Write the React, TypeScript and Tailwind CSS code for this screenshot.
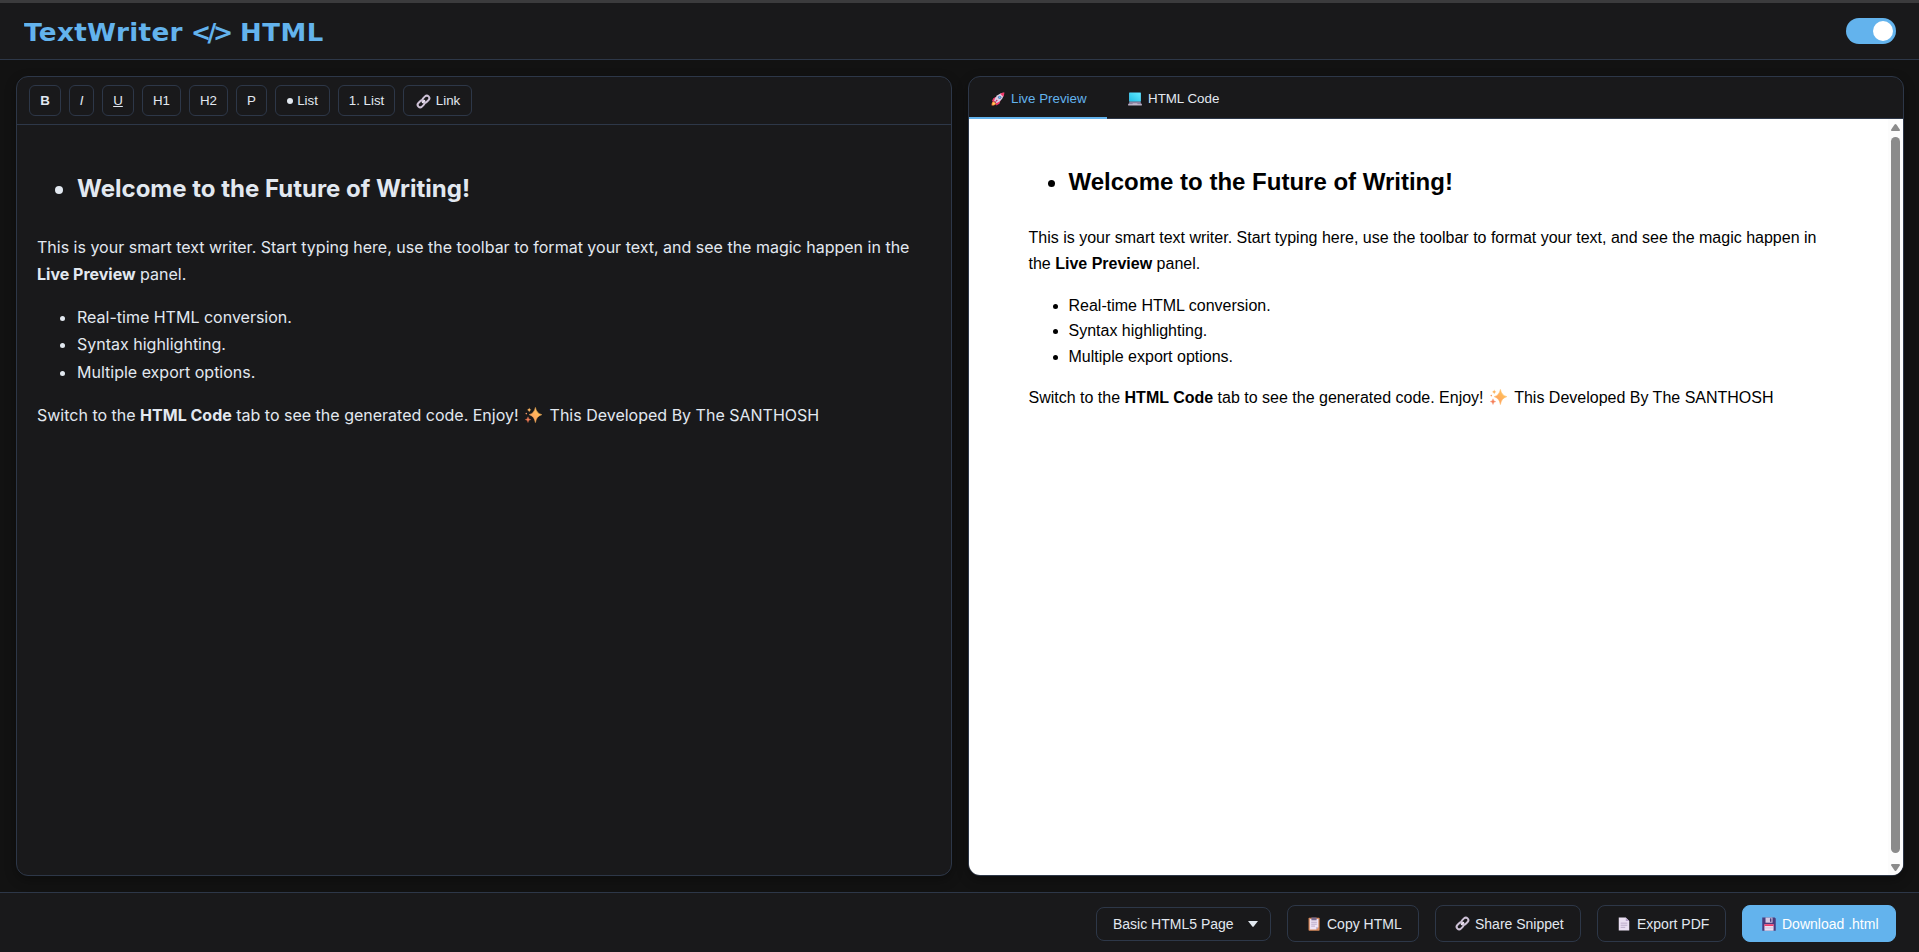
import React, { useState } from "react";

type IconProps = { className?: string };

function LinkIcon({ className }: IconProps) {
  return (
    <svg viewBox="0 0 16 16" className={className} fill="none" stroke="#cdc1d6" strokeWidth="2.1" strokeLinecap="round">
      <rect x="-4" y="-2.7" width="8" height="5.4" rx="2.7" transform="translate(10.6 5.4) rotate(-45)" />
      <rect x="-4" y="-2.7" width="8" height="5.4" rx="2.7" transform="translate(5.4 10.6) rotate(-45)" />
      <path d="M6.8 9.200l2.400-2.400" stroke="#efe8f4" strokeWidth="1.4" />
    </svg>
  );
}

function RocketIcon({ className }: IconProps) {
  return (
    <svg viewBox="0 0 16 16" className={className}>
      <path d="M.8 15.400c-.4-2 .4-4.200 2.200-5l3 3C5 15 2.800 15.700.8 15.400z" fill="#ff8a3c" />
      <path d="M1.800 14.500c0-1.200.6-2.300 1.700-2.700l1.200 1.200c-.7 1.100-1.700 1.500-2.900 1.500z" fill="#ffd35c" />
      <path d="M6.500 5L2.600 7 1 10.500l4.400.6zM11 9.500l-1.400 4-3.600 2-.6-4.400z" fill="#f2386b" />
      <path d="M3.600 10C4.800 5.200 8.600 1.300 15 .8c-.5 6.400-4.400 10.400-9.100 11.700z" fill="#d9cfe4" />
      <path d="M10.600 1.900C12 1.100 13.500.8 15.400.6c-.2 1.900-.6 3.500-1.400 4.900z" fill="#f2386b" />
      <circle cx="9.900" cy="6.100" r="1.900" fill="#66609a" />
      <circle cx="9.900" cy="6.100" r="1.200" fill="#5bc5fa" />
      <path d="M6.600 8.600l1 1-3.700 3z" fill="#c81e56" />
    </svg>
  );
}

function LaptopIcon({ className }: IconProps) {
  return (
    <svg viewBox="0 0 16 16" className={className}>
      <defs>
        <linearGradient id="screen" x1="0" y1="1" x2="1" y2="0">
          <stop offset="0" stopColor="#22bfe6" />
          <stop offset="1" stopColor="#62eaff" />
        </linearGradient>
      </defs>
      <rect x="1.200" y=".5" width="13.600" height="10.500" rx=".7" fill="#4fb9e0" />
      <rect x="1.700" y="1" width="12.600" height="9.500" fill="url(#screen)" />
      <path d="M1.800 11h12.400l1.600 3.200H.2z" fill="#8b819f" />
      <path d="M.2 13.600h15.600v1.900H.2z" fill="#b9b0c4" />
      <path d="M5.500 13h5l.5 1H5z" fill="#d9d2e0" />
    </svg>
  );
}

function ClipboardIcon({ className }: IconProps) {
  return (
    <svg viewBox="0 0 16 16" className={className}>
      <rect x="1.800" y=".8" width="12.600" height="14.900" rx=".8" fill="#d98a5c" />
      <path d="M3.200 2.400h9.800v9.400l-2.600 2.600H3.200z" fill="#eee3f5" />
      <path d="M13 11.800l-2.600 2.600v-2.600z" fill="#b8a7ca" />
      <path d="M5 .5h6v3.300H5z" fill="#7a6b8d" />
      <path d="M4.800 6h6.500M4.800 8.200h6.500M4.800 10.400h4.300" stroke="#ae9bbd" strokeWidth=".9" />
    </svg>
  );
}

function PageIcon({ className }: IconProps) {
  return (
    <svg viewBox="0 0 16 16" className={className}>
      <path d="M2 .5h8l4 4v11H2z" fill="#eadff2" />
      <path d="M10 .5l4 4h-4z" fill="#b7a4c9" />
      <path d="M4.200 7h7.600M4.200 9.400h7.600M4.200 11.800h5.200" stroke="#b5a4c3" strokeWidth="1" />
    </svg>
  );
}

function FloppyIcon({ className }: IconProps) {
  return (
    <svg viewBox="0 0 16 16" className={className}>
      <path d="M.3.6h14.200l1.200 1.200v13.900H.3z" fill="#493b7d" />
      <path d="M4 .6h8v5.900H4z" fill="#d5c9e3" />
      <path d="M9.100 1.500h1.700v4H9.100z" fill="#493b7d" />
      <path d="M2.800 8.300h10.400v7.400H2.800z" fill="#eadff2" />
      <path d="M2.800 8.300h10.400v2H2.800z" fill="#f33b69" />
      <path d="M2.800 12.500h10.400" stroke="#c7b9d5" strokeWidth=".8" />
    </svg>
  );
}

function SparklesIcon({ className }: IconProps) {
  return (
    <svg viewBox="0 0 17 16" className={className}>
      <defs>
        <linearGradient id="spark" x1="0" y1="1" x2="1" y2="0">
          <stop offset="0" stopColor="#ff8f62" />
          <stop offset="1" stopColor="#ffd358" />
        </linearGradient>
      </defs>
      <path d="M10.400.4c1 4 2.300 5.900 6.400 7.300-4.100 1.400-5.400 3.300-6.400 7.900-1-4.600-2.300-6.500-6.200-7.900 3.900-1.400 5.200-3.300 6.200-7.300z" fill="url(#spark)" stroke="#ffb45c" strokeWidth=".5" strokeLinejoin="round" />
      <path d="M4.200.6c.3 1.500.8 2 2.200 2.300-1.400.4-1.900.9-2.200 2.400-.3-1.500-.8-2-2.200-2.400C3.400 2.600 3.900 2.100 4.200.6z" fill="#fbb562" />
      <path d="M3 9.800c.4 1.800 1 2.400 2.700 2.800-1.700.4-2.300 1-2.700 2.900-.4-1.900-1-2.500-2.700-2.900C2 12.200 2.600 11.600 3 9.800z" fill="#f47d57" stroke="#f47d57" strokeWidth=".4" />
      <circle cx="1.300" cy="6.600" r=".8" fill="#f59a62" />
    </svg>
  );
}

const tools = [
  { label: "B", style: "w-8 font-bold" },
  { label: "I", style: "w-[25px] italic" },
  { label: "U", style: "w-8 underline" },
  { label: "H1", style: "w-[39px]" },
  { label: "H2", style: "w-[39px]" },
  { label: "P", style: "w-[31px]" },
];

const toolBase =
  "flex h-[31px] items-center justify-center rounded-md border border-[#2d3748] text-[13.333px] leading-none whitespace-nowrap";

const actionBase =
  "flex h-[37px] items-center rounded-lg border pl-[19px] text-sm leading-none whitespace-nowrap";

function Document({ listClass, headingClass }: { listClass: string; headingClass: string }) {
  return (
    <>
      <ul className="list-disc pl-10">
        <li className={headingClass}>Welcome to the Future of Writing!</li>
      </ul>
      <p>
        This is your smart text writer. Start typing here, use the toolbar to format your text, and see the magic happen in the{" "}
        <b>Live Preview</b> panel.
      </p>
      <ul className={listClass}>
        <li>Real-time HTML conversion.</li>
        <li>Syntax highlighting.</li>
        <li>Multiple export options.</li>
      </ul>
      <p>
        Switch to the <b>HTML Code</b> tab to see the generated code. Enjoy!{" "}
        <SparklesIcon className="ml-[2px] mr-[3px] inline-block h-4 w-[17px] align-[-2px]" /> This Developed By The SANTHOSH
      </p>
    </>
  );
}

export default function App() {
  const [dark, setDark] = useState(true);

  return (
    <div className="flex h-screen flex-col overflow-hidden bg-[#121212] font-['Liberation_Sans',sans-serif] text-[#e2e8f0]">
      <header className="flex h-[60px] shrink-0 items-center justify-between border-t-3 border-b border-t-[#3b3b3d] border-b-[#2d3748] bg-[#19191b] pr-[23px] pl-6">
        <h1 className="flex items-center pt-[3px] font-['DejaVu_Sans',sans-serif] text-2xl leading-none font-bold whitespace-nowrap text-[#63b3ed]">
          <span className="w-[167px] origin-left scale-x-[1.095] tracking-[0.3px]">TextWriter</span>
          <span className="w-[49px] tracking-[-3.5px]">&lt;/&gt;</span>
          <span className="origin-left scale-x-[1.08] tracking-[0.5px]">HTML</span>
        </h1>
        <button
          onClick={() => setDark(!dark)}
          aria-label="Toggle theme"
          className="flex h-[26px] w-[50px] items-center justify-end rounded-full bg-[#63b3ed] pr-[3px]"
        >
          <span className="size-5 rounded-full bg-white" />
        </button>
      </header>

      <main className="flex h-[832px] shrink-0 gap-4 px-4 pt-4 pb-4">
        <section className="flex w-[936px] shrink-0 flex-col overflow-hidden rounded-xl border border-[#2d3748] bg-[#19191b] shadow-[0_4px_12px_rgba(0,0,0,0.3)]">
          <div className="flex h-12 shrink-0 items-center gap-2 border-b border-[#2d3748] px-3">
            {tools.map((t) => (
              <button key={t.label} className={`${toolBase} ${t.style}`}>
                {t.label}
              </button>
            ))}
            <button className={`${toolBase} w-[55px] gap-1`}>
              <span className="size-1.5 rounded-full bg-[#e2e8f0]" />
              List
            </button>
            <button className={`${toolBase} w-[57px]`}>1. List</button>
            <button className={`${toolBase} w-[69px] gap-[5px] pt-px pl-px`}>
              <LinkIcon className="size-[15px]" />
              Link
            </button>
          </div>
          <div className="px-5 pt-11 font-['Inter',sans-serif] text-base leading-[27.2px]">
            <Document headingClass="mb-6 text-2xl leading-[40.8px] font-bold" listClass="my-4 list-disc pl-10" />
          </div>
        </section>

        <section className="flex w-[936px] shrink-0 flex-col overflow-hidden rounded-xl border border-[#2d3748] bg-[#19191b] shadow-[0_4px_12px_rgba(0,0,0,0.3)]">
          <div className="flex h-[42px] shrink-0 border-b border-[#2d3748] text-[13.333px] leading-none">
            <button className="-mb-px flex w-[138px] items-center gap-[6px] border-b-2 border-[#63b3ed] pt-[3px] pl-[22px] text-[#63b3ed]">
              <RocketIcon className="size-[14px]" />
              Live Preview
            </button>
            <button className="-mb-px flex items-center gap-[6px] border-b-2 border-transparent pt-[3px] pl-[21px]">
              <LaptopIcon className="size-[14px]" />
              HTML Code
            </button>
          </div>
          <div className="flex min-h-0 flex-1 bg-white text-black">
            <div className="flex-1 pt-11 pr-[46px] pl-[59.5px] text-base leading-[25.6px]">
              <Document headingClass="mb-6 text-2xl leading-[38.4px] font-bold" listClass="my-4 list-disc pl-10" />
            </div>
            <div className="flex w-[15px] flex-col items-center bg-[#fcfcfc] pt-[5px] pb-1">
              <svg viewBox="0 0 9 7" className="h-[7px] w-[9px] shrink-0" fill="#8b8b8b">
                <path d="M3.600.6Q4.500-.5 5.400.6L8.800 5.500Q9.200 7 8 7H1Q-.2 7 .2 5.500z" />
              </svg>
              <div className="mt-[6px] mb-[11px] w-[9px] flex-1 rounded-full bg-[#8b8b8b]" />
              <svg viewBox="0 0 9 7" className="h-[7px] w-[9px] shrink-0" fill="#8b8b8b">
                <path d="M3.600 6.400Q4.500 7.500 5.400 6.400L8.800 1.500Q9.200 0 8 0H1Q-.2 0 .2 1.500z" />
              </svg>
            </div>
          </div>
        </section>
      </main>

      <footer className="flex h-[60px] shrink-0 items-center justify-end gap-4 border-t border-[#2d3748] bg-[#19191b] pt-[2px] pr-[23px]">
        <button className="flex h-[34px] w-[175px] items-center justify-between rounded-lg border border-[#2d3748] pr-3 pl-4 text-sm leading-none">
          Basic HTML5 Page
          <svg viewBox="0 0 10 6" className="h-[6px] w-[10px]" fill="#e2e8f0">
            <path d="M0 0h10L5.500 5.700H4.500z" />
          </svg>
        </button>
        <button className={`${actionBase} w-[132px] gap-[6px] border-[#2d3748]`}>
          <ClipboardIcon className="size-[14px]" />
          Copy HTML
        </button>
        <button className={`${actionBase} w-[146px] gap-[5px] border-[#2d3748]`}>
          <LinkIcon className="size-[15px]" />
          Share Snippet
        </button>
        <button className={`${actionBase} w-[129px] gap-[6px] border-[#2d3748]`}>
          <PageIcon className="size-[14px]" />
          Export PDF
        </button>
        <button className={`${actionBase} w-[154px] gap-[6px] border-[#63b3ed] bg-[#63b3ed] text-white`}>
          <FloppyIcon className="size-[14px]" />
          Download .html
        </button>
      </footer>
    </div>
  );
}
